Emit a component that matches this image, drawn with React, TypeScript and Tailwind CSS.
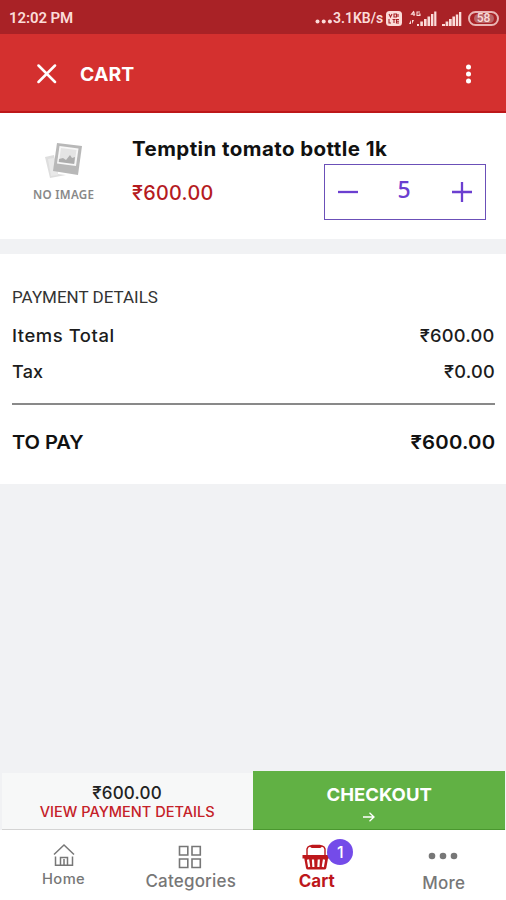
import React from "react";

function StatusBar() {
  return (
    <div className="flex h-[34px] items-center bg-[#a92226] pl-[9px] pr-[7px] pt-[2px] font-[Roboto,sans-serif] text-[#fbdcd9]">
      <span className="text-[15px] font-semibold leading-none tracking-[-0.1px]">12:02 PM</span>
      <div className="ml-auto flex items-center">
        <svg width="18" height="14" viewBox="0 0 18 14" fill="currentColor">
          <circle cx="2.5" cy="10.5" r="2" />
          <circle cx="8.7" cy="10.5" r="2" />
          <circle cx="14.9" cy="10.5" r="2" />
        </svg>
        <span className="w-[52px] whitespace-nowrap text-[14px] font-semibold leading-none">3.1KB/s</span>
        <svg className="ml-px" width="16" height="15" viewBox="0 0 16 15">
          <rect width="16" height="15" rx="3.5" fill="#fbdcd9" />
          <path d="M3 3l1.5 3L6 3M8 3h2.5v3H8zM12 3v3M3 8v4h2M6.5 8.5h3M8 8.5V12M13 8.5h-2.5V12H13M10.5 10.2H13" fill="none" stroke="#a92226" strokeWidth="1.1" />
        </svg>
        <svg className="ml-[7px]" width="28" height="17" viewBox="0 0 28 17">
          <path d="M5 1L2.5 4.3h3.7M5 2v4M11 2H8v3.5h3V4H9.5" fill="none" stroke="#fbdcd9" strokeWidth="1.1" />
          <path d="M0 14l2-4v4zM3 14l2-4H3zM8 14h2v2H8zM11.3 11.5h2.6V16h-2.6zM15 9h2.6v7H15zM18.5 6.5h2.6V16h-2.6zM22 4h2.4v12H22zM25.2 1.5h2.2V16h-2.2z" fill="#fbdcd9" />
        </svg>
        <svg className="ml-[5px]" width="20" height="17" viewBox="0 0 20 17" fill="#fbdcd9">
          <path d="M0 14h3v2H0zM3.6 11.5h2.7V16H3.6zM7 9h2.7v7H7zM10.4 6.5H13V16h-2.6zM13.8 4.5h2.4V16h-2.4zM17 2h2.3v14H17z" />
        </svg>
        <span className="ml-[6px] flex h-[15px] w-[31px] items-center justify-center rounded-full border-2 border-[#e9b5b4]">
          <span className="flex h-[9px] w-[20px] items-center justify-center rounded-full bg-[#b96568] text-[12px] font-medium leading-none">58</span>
        </span>
      </div>
    </div>
  );
}

function Header() {
  return (
    <header className="flex h-[79px] items-center border-b-2 border-[#bd1719] bg-[#d4302f] pl-[37px] pr-[34px] pt-[3px] text-white">
      <svg width="20" height="20" viewBox="0 0 20 20" fill="none" stroke="currentColor" strokeWidth="2.5" strokeLinecap="round">
        <path d="M1.5 1.5L18 18M18 1.5L1.5 18" />
      </svg>
      <h1 className="ml-[23px] mt-px origin-left scale-x-[1.02] text-[19px] font-bold leading-none tracking-[0.1px]">CART</h1>
      <svg className="ml-auto" width="7" height="20" viewBox="0 0 7 20" fill="currentColor">
        <circle cx="3.5" cy="3" r="2.5" />
        <circle cx="3.5" cy="10" r="2.5" />
        <circle cx="3.5" cy="17" r="2.5" />
      </svg>
    </header>
  );
}

function NoImage() {
  return (
    <div className="flex w-[64px] flex-col items-center">
      <svg width="40" height="38" viewBox="0 0 40 38">
        <path d="M1 15l9-2 4 19 8 1-16 3z" fill="#dedede" />
        <path d="M4 17l6-1 4 17-7 1z" fill="#e9e9e9" />
        <path d="M13 1l25 3-4 29-25-4z" fill="#b8b8b8" />
        <path d="M15.5 4l19 2.5-2.5 17.5-19-2.5z" fill="#f7f7f7" />
        <path d="M17 6l15.500 2-1.900 13-15.500-2z" fill="#e4e4e4" />
        <path d="M15 17l4-1 3 2 4-5 2 3 3-1-.8 7-15.500-2z" fill="#adadad" />
      </svg>
      <span className="mt-[9px] scale-x-[0.97] whitespace-nowrap font-['Noto_Sans',sans-serif] text-[12px] font-semibold leading-none tracking-[0.3px] text-[#888]">NO IMAGE</span>
    </div>
  );
}

function CartItem() {
  return (
    <section className="flex h-[126px] bg-white pl-[32px] pr-[20px] pt-[29px]">
      <NoImage />
      <div className="ml-[36px] flex flex-1 flex-col">
        <h2 className="mt-[-3px] origin-left scale-x-[1.052] whitespace-nowrap text-[19.5px] font-[650] leading-[20px] tracking-[0.4px] text-[#111]">Temptin tomato bottle 1k</h2>
        <div className="mt-[5px] flex justify-between">
          <span className="mt-[19px] origin-left scale-x-[1.015] text-[19.5px] font-medium leading-[20px] tracking-[0.3px] text-[#b51b1f]">₹600.00</span>
          <div className="flex h-[56px] w-[162px] items-center justify-between border border-[#6b50b8] px-[13px] text-[#6b3fd0]">
            <svg width="20" height="20" viewBox="0 0 20 20" stroke="currentColor" strokeWidth="2.3"><path d="M0 10h20" /></svg>
            <span className="mb-[5px] ml-[-2px] font-['Noto_Sans',sans-serif] text-[23px] font-medium leading-none">5</span>
            <svg width="20" height="20" viewBox="0 0 20 20" stroke="currentColor" strokeWidth="2.3"><path d="M0 10h20M10 0v20" /></svg>
          </div>
        </div>
      </div>
    </section>
  );
}

function PaymentDetails() {
  return (
    <section className="mt-[15px] h-[230px] bg-white pl-[12px] pr-[11px] pt-[34px] text-[#1c1c1c]">
      <h3 className="font-[Roboto,sans-serif] text-[17px] leading-[18px] text-[#333]">PAYMENT DETAILS</h3>
      <div className="mt-[20px] flex justify-between text-[17.5px] font-medium leading-[20px] tracking-[0.5px]">
        <span className="origin-left scale-x-[1.055]">Items Total</span>
        <span className="origin-right scale-x-[1.045] tracking-[0.2px]">₹600.00</span>
      </div>
      <div className="mt-[16px] flex justify-between text-[17.5px] font-medium leading-[20px] tracking-[0.2px]">
        <span className="origin-left scale-x-[1.03]">Tax</span>
        <span className="origin-right scale-x-[1.04]">₹0.00</span>
      </div>
      <div className="mt-[21px] h-[2px] bg-[#898989]" />
      <div className="mt-[28px] flex justify-between text-[19px] font-semibold leading-[20px] tracking-[0.2px] text-[#111]">
        <span className="origin-left scale-x-[1.06] tracking-[-0.1px]">TO PAY</span>
        <span className="origin-right scale-x-[1.07]">₹600.00</span>
      </div>
    </section>
  );
}

function CheckoutBar() {
  return (
    <div className="mt-auto flex h-[59px]">
      <div className="ml-[2px] mt-[2px] flex w-[251px] flex-col items-center border-b border-[#d4d4d4] bg-[#f7f8f8] pt-[10px]">
        <span className="mr-px text-[17px] font-medium leading-[20px] tracking-[0.2px] text-[#222]">₹600.00</span>
        <span className="mr-px scale-x-[1.04] whitespace-nowrap text-[14px] font-medium leading-[17px] text-[#c52128]">VIEW PAYMENT DETAILS</span>
      </div>
      <button className="mr-px flex flex-1 flex-col items-center border-b border-[#4a972f] bg-[#61b144] pt-[14px] text-white">
        <span className="ml-px scale-x-[1.03] text-[18px] font-bold leading-[20px]">CHECKOUT</span>
        <svg className="mr-[21px] mt-[7px]" width="12" height="10" viewBox="0 0 12 10" fill="none" stroke="currentColor" strokeWidth="1.3">
          <path d="M0 5h11M6.5 .8L11 5 6.5 9.2" />
        </svg>
      </button>
    </div>
  );
}

function BottomNav() {
  return (
    <nav className="grid h-[70px] grid-cols-4 bg-white text-[#777]">
      <div className="flex flex-col items-center pt-[13px]">
        <svg className="ml-px" width="22" height="24" viewBox="0 0 22 24" fill="none" stroke="currentColor" strokeWidth="1.5">
          <path d="M1 11.5L11 2l10 9.5M2.5 13.5v8.7h17v-8.7M7.5 22v-7.5h7V22M11 16v6" />
        </svg>
        <span className="mt-[3px] scale-x-[1.05] text-[14px] font-medium leading-[17px] tracking-[0.4px]">Home</span>
      </div>
      <div className="flex flex-col items-center pt-[15px]">
        <svg width="24" height="24" viewBox="0 0 24 24" fill="none" stroke="currentColor" strokeWidth="1.6">
          <path d="M1.5 1.5h8.3v8.5H1.5zM14 1.5h8.3v8.5H14zM1.5 14h8.3v8.5H1.5zM14 14h8.3v8.5H14z" />
        </svg>
        <span className="ml-[2px] mt-[2px] text-[17px] font-medium leading-[20px] tracking-[0.2px]">Categories</span>
      </div>
      <div className="flex flex-col items-center pt-[14px] text-[#bd171b]">
        <div className="relative">
          <svg width="28" height="26" viewBox="0 0 28 26" fill="none" stroke="currentColor">
            <path d="M5 13V5q.5-2.500 3-3h12q2.500.5 3 3v8" strokeWidth="1.4" />
            <path d="M10 2.3h8" strokeWidth="3.3" strokeLinecap="round" />
            <path fill="currentColor" stroke="none" d="M0.500 11h27v3.500H26L24.300 24q-.4 1.500-2 1.500H6q-1.600 0-2-1.500L2.300 14.500H.5z" />
            <path d="M6 15.500l1.200 7.500M11 15.500l.4 7.500M16.800 15.500l-.4 7.500M22 15.500L20.800 23" stroke="white" strokeWidth="2.200" />
          </svg>
          <span className="absolute left-[25px] top-[-5px] flex h-[26px] w-[26px] items-center justify-center rounded-full bg-[#744be9] text-[16px] font-medium leading-none text-white">1</span>
        </div>
        <span className="ml-px mt-px text-[17px] font-bold leading-[20px]">Cart</span>
      </div>
      <div className="flex flex-col items-center pt-[22px]">
        <svg width="30" height="8" viewBox="0 0 30 8" fill="currentColor">
          <circle cx="4" cy="4" r="3.3" />
          <circle cx="15" cy="4" r="3.3" />
          <circle cx="26" cy="4" r="3.3" />
        </svg>
        <span className="ml-[2px] mt-[13px] text-[17px] font-medium leading-[20px] tracking-[0.2px]">More</span>
      </div>
    </nav>
  );
}

export default function App() {
  return (
    <div className="flex h-[900px] w-[506px] flex-col overflow-hidden bg-[#f1f2f4] font-[Inter,sans-serif]">
      <StatusBar />
      <Header />
      <CartItem />
      <PaymentDetails />
      <CheckoutBar />
      <BottomNav />
    </div>
  );
}
